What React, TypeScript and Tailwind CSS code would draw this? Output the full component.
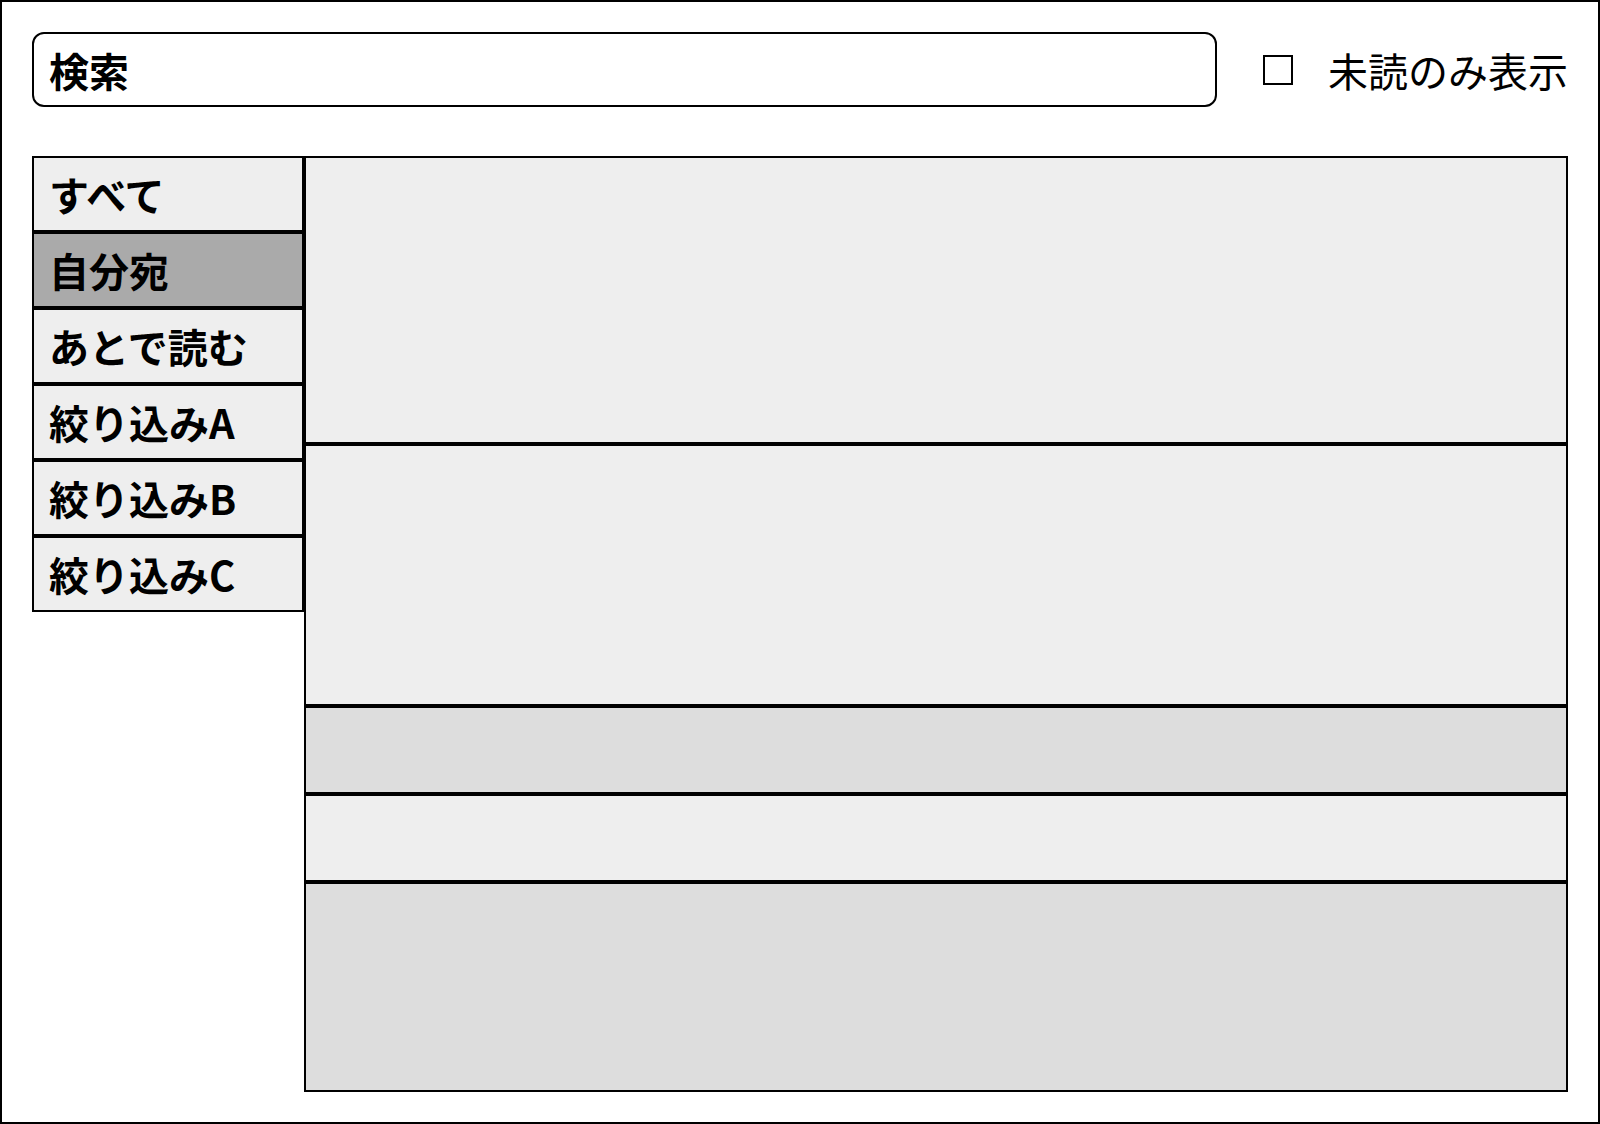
const filters = [
  { label: "すべて", active: false },
  { label: "自分宛", active: true },
  { label: "あとで読む", active: false },
  { label: "絞り込みA", active: false },
  { label: "絞り込みB", active: false },
  { label: "絞り込みC", active: false },
];

const rows = [
  { h: "h-[288px]", bg: "bg-[#eeeeee]" },
  { h: "h-[262px]", bg: "bg-[#eeeeee]" },
  { h: "h-[88px]", bg: "bg-[#dddddd]" },
  { h: "h-[88px]", bg: "bg-[#eeeeee]" },
  { h: "h-[210px]", bg: "bg-[#dddddd]" },
];

export default function App() {
  return (
    <div
      className="w-[1600px] h-[1124px] bg-white border-2 border-black p-[30px] flex flex-col text-black"
      style={{ fontFamily: '"Noto Sans CJK JP", "Noto Sans", sans-serif' }}
    >
      {/* Header: search + unread toggle */}
      <div className="flex items-center h-[75px] shrink-0">
        <div className="flex-1 h-full border-2 border-black rounded-[12px] flex items-center pl-[15px]">
          <span className="text-[40px] font-bold leading-none">検索</span>
        </div>
        <label className="flex items-center ml-[46px]">
          <span className="w-[30px] h-[30px] border-2 border-black bg-white" />
          <span className="ml-[35px] text-[40px] leading-none whitespace-nowrap">
            未読のみ表示
          </span>
        </label>
      </div>

      {/* Body: filter list + feed */}
      <div className="flex mt-[49px] flex-1">
        <div className="w-[272px] shrink-0 flex flex-col">
          {filters.map((f) => (
            <div
              key={f.label}
              className={`h-[76px] border-2 border-black flex items-center pl-[15px] ${
                f.active ? "bg-[#aaaaaa]" : "bg-[#eeeeee]"
              }`}
            >
              <span className="text-[40px] font-bold leading-none whitespace-nowrap">
                {f.label}
              </span>
            </div>
          ))}
        </div>

        <div className="flex-1 flex flex-col">
          {rows.map((r, i) => (
            <div key={i} className={`${r.h} ${r.bg} border-2 border-black`} />
          ))}
        </div>
      </div>
    </div>
  );
}
